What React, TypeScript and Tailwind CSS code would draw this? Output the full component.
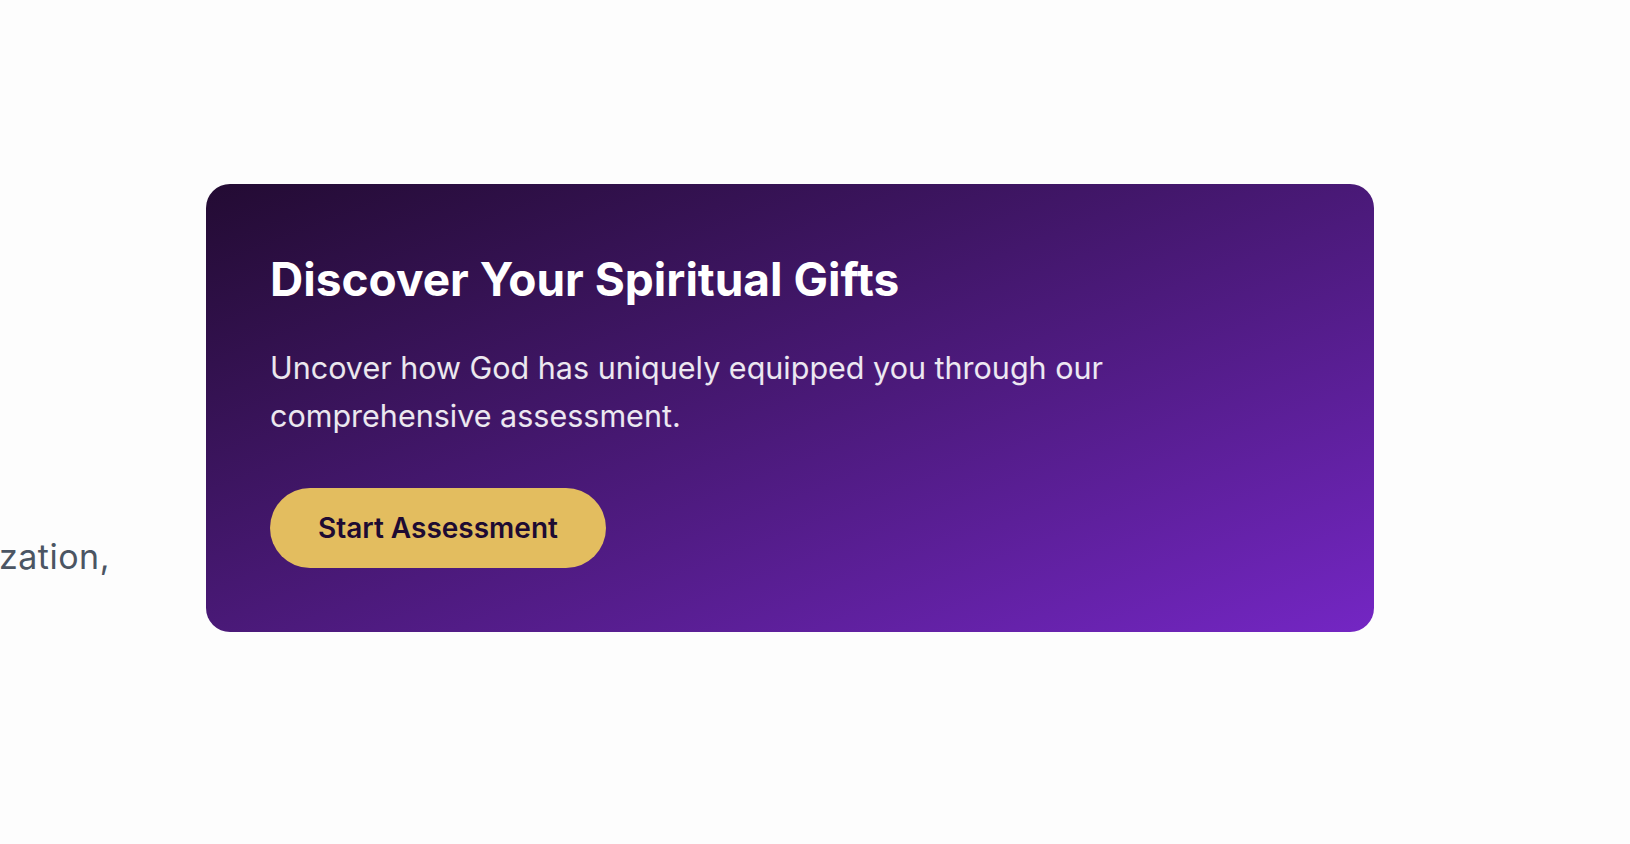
export default function App() {
  return (
    <div className="h-[844px] w-full overflow-hidden bg-[#fdfdfd] font-['Inter',sans-serif]">
      <div className="flex pt-[184px]">
        {/* previous slide, mostly scrolled out of view */}
        <div className="ml-[-490px] w-[600px] shrink-0 pt-[354px]">
          <p className="whitespace-nowrap text-right text-[34px] leading-[38px] tracking-[0.015em] text-[#4b5563]">
            strengthen your organization,
          </p>
        </div>

        <div className="ml-[96px] w-[1168px] shrink-0 rounded-3xl bg-linear-to-br from-[#230b33] to-[#7426c4] px-16 pt-[68px] pb-16">
          <h2 className="text-[46px] leading-[1.2] font-bold text-white">
            Discover Your Spiritual Gifts
          </h2>
          <p className="mt-[37px] max-w-[880px] text-[30.5px] leading-[48px] text-white/90">
            Uncover how God has uniquely equipped you through our
            comprehensive assessment.
          </p>
          <button
            type="button"
            className="mt-[48px] flex h-[80px] items-center rounded-full bg-[#e3bd5f] px-[48px] text-[28px] font-semibold text-[#1e0b32]"
          >
            Start Assessment
          </button>
        </div>
      </div>
    </div>
  );
}
